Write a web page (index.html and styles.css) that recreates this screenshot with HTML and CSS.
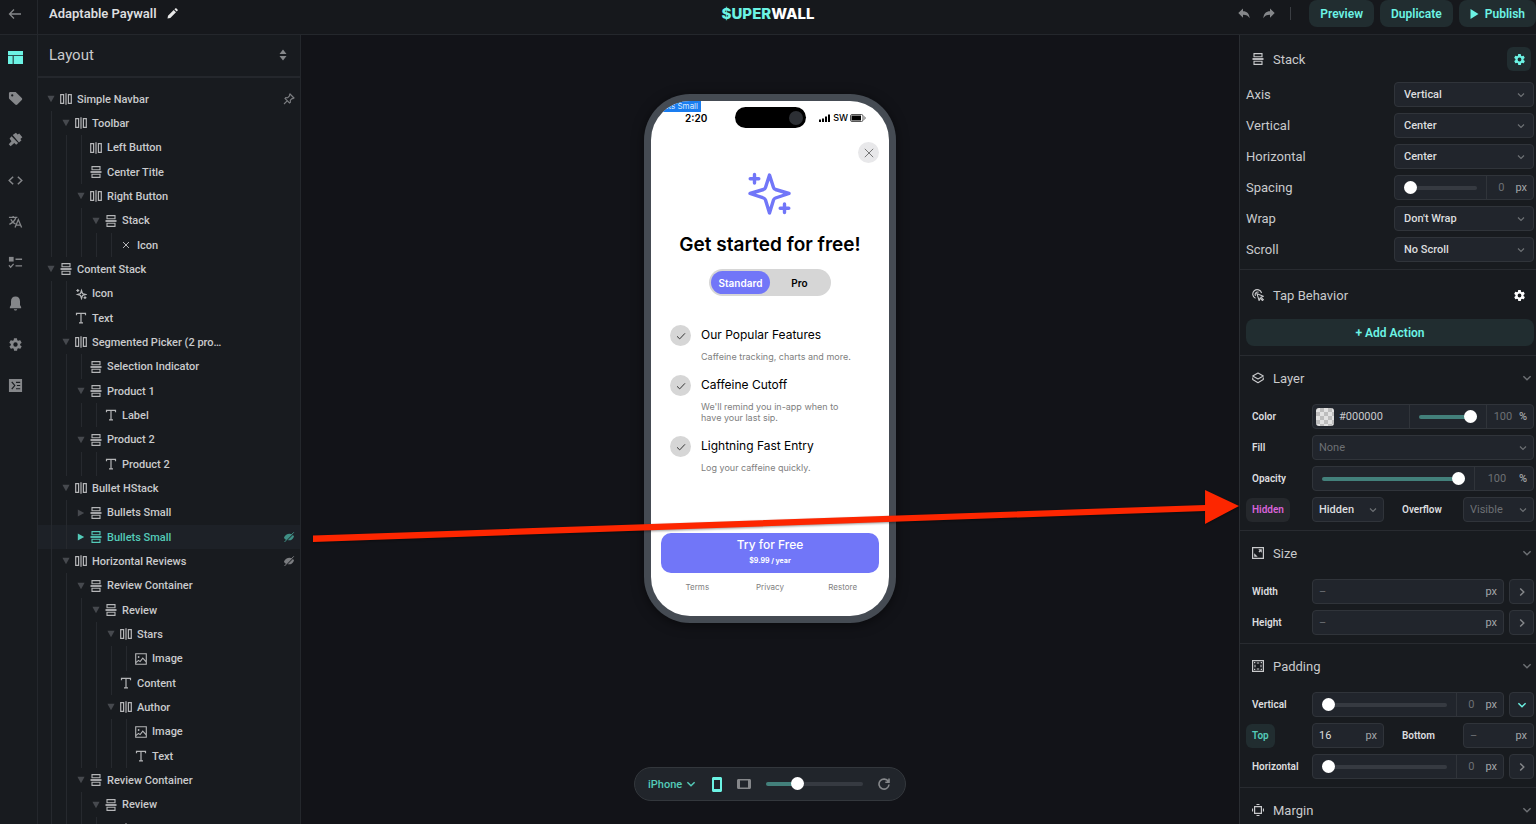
FILE: index.html
```html
<!DOCTYPE html>
<html lang="en">
<head>
    <meta charset="UTF-8">
    <meta name="viewport" content="width=device-width, initial-scale=1.0">
    <title>Adaptable Paywall - Superwall</title>
    <link rel="stylesheet" href="styles.css">
</head>
<body>
    <!-- icon sprite -->
    <svg class="sprite" aria-hidden="true">
        <symbol id="hstack" viewBox="0 0 12 12"><path d="M.7 1.7h2.900v8.600H.7zM8.400 1.700h2.900v8.600H8.400zM6 .3v11.400" fill="none" stroke="currentColor" stroke-width="1.200"/></symbol>
        <symbol id="vstack" viewBox="0 0 12 12"><path d="M2 .6h8v3.200H2zM2 8.200h8v3.200H2z" fill="none" stroke="currentColor" stroke-width="1.100"/><path d="M.5 6h11" fill="none" stroke="currentColor" stroke-width="1.800"/></symbol>
        <symbol id="text" viewBox="0 0 12 12"><path d="M1.500 3.200V1.300h9v1.900M6 1.300v9.600M4 10.900h4" fill="none" stroke="currentColor" stroke-width="1.200"/></symbol>
        <symbol id="image" viewBox="0 0 12 12"><path d="M.7.7h10.600v10.600H.7zM.9 9.600l2.600-2.200 1.600 1.200 2.700-3.400 3.400 3.600" fill="none" stroke="currentColor" stroke-width="1.100"/><circle cx="3.600" cy="4" r=".9" fill="currentColor"/></symbol>
        <symbol id="cross" viewBox="0 0 12 12"><path d="M3 3l6 6M9 3l-6 6" fill="none" stroke="currentColor" stroke-width="1"/></symbol>
        <symbol id="spark" viewBox="0 0 12 12"><path d="M6.500 2.500l1 3 3 1-3 1-1 3-1-3-3-1 3-1zM2.800 1v3M1.300 2.500h3M10 8.300v2.800M8.600 9.700h2.800" fill="none" stroke="currentColor" stroke-width="1.200"/></symbol>
        <symbol id="down" viewBox="0 0 10 10"><path d="M.5 1h9L5 9z" fill="currentColor"/></symbol>
        <symbol id="right" viewBox="0 0 10 10"><path d="M1 .5v9L9 5z" fill="currentColor"/></symbol>
        <symbol id="chev-down" viewBox="0 0 10 10"><path d="M2 3.500l3 3 3-3" fill="none" stroke="currentColor" stroke-width="1.200"/></symbol>
        <symbol id="chev-right" viewBox="0 0 10 10"><path d="M3.500 2l3 3-3 3" fill="none" stroke="currentColor" stroke-width="1.200"/></symbol>
        <symbol id="hidden-eye" viewBox="0 0 12 12"><path d="M1 6.600C2.200 3.400 6 2 9 3.400L3.400 9C2 8.600 1.300 7.600 1 6.600zM11 5.400C9.800 8.600 7.500 9.800 4.700 9.200L9.900 4C10.500 4.400 10.800 4.900 11 5.400z" fill="currentColor"/><path d="M1.500 11L10.800 1.300" stroke="currentColor" stroke-width="1"/></symbol>
        <symbol id="gear" viewBox="0 0 24 24"><path fill="currentColor" d="M19.400 13a7.500 7.500 0 0 0 0-2l2.100-1.600a.5.5 0 0 0 .1-.7l-2-3.400a.5.5 0 0 0-.6-.2l-2.500 1a7.300 7.300 0 0 0-1.700-1l-.4-2.700a.5.5 0 0 0-.5-.4h-4a.5.5 0 0 0-.5.4L9.100 5.100a7.700 7.700 0 0 0-1.700 1l-2.500-1a.5.5 0 0 0-.6.2l-2 3.400a.5.5 0 0 0 .1.700L4.600 11a7.900 7.900 0 0 0 0 2l-2.100 1.600a.5.5 0 0 0-.1.700l2 3.400c.1.200.4.300.6.200l2.500-1c.5.400 1.100.7 1.700 1l.4 2.700c0 .2.200.4.500.4h4c.2 0 .5-.2.5-.4l.4-2.700a7.300 7.300 0 0 0 1.700-1l2.500 1c.2.100.5 0 .6-.2l2-3.400a.5.5 0 0 0-.1-.7zM12 15.500a3.500 3.500 0 1 1 0-7 3.500 3.500 0 0 1 0 7z"/></symbol>
        <symbol id="check" viewBox="0 0 10 10"><path d="M1 5.300l2.700 2.600L9 2.300" fill="none" stroke="currentColor" stroke-width="1"/></symbol>
    </svg>

    <header class="topbar">
        <div class="topbar-left">
            <button class="back" aria-label="Back"><svg width="14" height="12" viewBox="0 0 14 12"><path d="M13 6H1.500M6 1.500L1.500 6 6 10.500" fill="none" stroke="currentColor" stroke-width="1.300"/></svg></button>
            <h1>Adaptable Paywall</h1>
            <button class="plain" aria-label="Rename"><svg width="11" height="11" viewBox="0 0 11 11"><path d="M.5 10.500l.5-2.800L6.700 2l2.300 2.300-5.700 5.700zM7.400 1.300l.8-.8c.4-.4 1-.3 1.300 0l1 1c.4.4.4.9 0 1.300l-.8.8z" fill="currentColor"/></svg></button>
        </div>
        <div class="logo"><span>$UPER</span>WALL</div>
        <div class="topbar-right">
            <button class="plain dim" aria-label="Undo"><svg width="12" height="11" viewBox="0 0 12 11"><path d="M5 .5v2.800c4 0 6.300 2.600 6.700 7C10.300 7.900 8.300 6.800 5 6.800v2.900L.3 5z" fill="currentColor"/></svg></button>
            <button class="plain dim" aria-label="Redo"><svg width="12" height="11" viewBox="0 0 12 11"><path d="M7 .5v2.800c-4 0-6.300 2.600-6.700 7C1.700 7.900 3.700 6.800 7 6.800v2.900L11.700 5z" fill="currentColor"/></svg></button>
            <span class="divider"></span>
            <button class="btn">Preview</button>
            <button class="btn">Duplicate</button>
            <button class="btn publish"><svg width="9" height="10" viewBox="0 0 9 10"><path d="M.5 0v10L8.500 5z" fill="currentColor"/></svg>Publish</button>
        </div>
    </header>

    <div class="workspace">
        <nav class="rail">
            <button class="active" aria-label="Layout"><svg viewBox="0 0 16 16"><path d="M0 1h16v4.500H0zM0 6.500h5V15H0zM6 6.500h10V15H6z" fill="currentColor"/></svg></button>
            <button aria-label="Products"><svg viewBox="0 0 16 16"><path d="M1 2.500C1 1.600 1.700 1 2.500 1h5c.5 0 .9.100 1.200.5l6 6c.6.600.6 1.600 0 2.200l-4.800 4.800c-.6.600-1.600.6-2.200 0l-6.200-6C1.100 8.200 1 7.900 1 7.500zM4.500 3.500a1.200 1.200 0 1 0 0 2.400 1.200 1.200 0 0 0 0-2.400z" fill="currentColor" fill-rule="evenodd"/></svg></button>
            <button aria-label="Theme"><svg viewBox="0 0 16 16"><path d="M5 3.200l3.500-2.400 1.700 1.800L12 1.500l3.300 4.200-2.100 1.800 1.200 1.400-2.700 2.400z" fill="currentColor"/><path d="M3.800 4.500l7 7.200-2.100 1.800-2-1.800-3.900 3.500-2-2.200L3.700 9.800 1.700 6.900z" fill="currentColor"/></svg></button>
            <button aria-label="Code"><svg viewBox="0 0 16 16"><path d="M5.500 4L1.300 8l4.200 4M10.500 4l4.200 4-4.200 4" fill="none" stroke="currentColor" stroke-width="1.600"/></svg></button>
            <button aria-label="Localization"><svg viewBox="0 0 16 16"><path d="M1 3.500h9M5.500 2v1.500M8.500 3.500C7.500 7 4.500 9.500 1.500 11M3 5.500c1 2.500 2.500 4 5 5M7.500 14.500l3.500-8.500 3.500 8.500M8.800 11.800h4.500" fill="none" stroke="currentColor" stroke-width="1.400"/></svg></button>
            <button aria-label="Checklist"><svg viewBox="0 0 16 16"><path d="M1 2h5v5H1z" fill="currentColor"/><path d="M8 4.500h7M8 11.500h7M1 11l1.800 2L6 9.500" fill="none" stroke="currentColor" stroke-width="1.400"/></svg></button>
            <button aria-label="Notifications"><svg viewBox="0 0 16 16"><path d="M8 .5c-3 0-4.800 2-4.800 5v4L2 11.800V13h12v-1.200l-1.200-2.300v-4c0-3-1.800-5-4.800-5zM6.200 14h3.600c-.2 1-.9 1.500-1.800 1.500S6.400 15 6.200 14z" fill="currentColor"/></svg></button>
            <button aria-label="Settings"><svg><use href="#gear"/></svg></button>
            <button aria-label="Console"><svg viewBox="0 0 16 16"><path d="M1 1h14v14H1zM3.500 4.500L6.500 8l-3 3.500 1 .8L8 8 4.500 3.700zM8.500 4v1.200H13V4zM9.500 7.400v1.200H13V7.400zM8.500 10.800V12H13v-1.200z" fill="currentColor" fill-rule="evenodd"/></svg></button>
        </nav>

        <aside class="layers">
            <div class="layers-head">
                <h2>Layout</h2>
                <button class="plain dim" aria-label="Collapse all"><svg width="8" height="12" viewBox="0 0 8 12"><path d="M.5 5h7L4 .5zM.5 7h7L4 11.500z" fill="currentColor"/></svg></button>
            </div>
            <ul class="tree">
                <li style="--depth:0"><svg class="caret"><use href="#down"/></svg><svg class="ico"><use href="#hstack"/></svg>Simple Navbar<svg class="state" viewBox="0 0 12 12"><path d="M7 1l4 4-1 .6-.8-.2-1.900 1.900.1 1.900-.9.800-4.500-4.500.8-.9 1.900.1 1.900-1.900-.2-.8zM4.200 7.800L1 11" fill="none" stroke="currentColor" stroke-width="1.100"/></svg></li>
                <li style="--depth:1"><svg class="caret"><use href="#down"/></svg><svg class="ico"><use href="#hstack"/></svg>Toolbar</li>
                <li style="--depth:2"><i class="leaf"></i><svg class="ico"><use href="#hstack"/></svg>Left Button</li>
                <li style="--depth:2"><i class="leaf"></i><svg class="ico"><use href="#vstack"/></svg>Center Title</li>
                <li style="--depth:2"><svg class="caret"><use href="#down"/></svg><svg class="ico"><use href="#hstack"/></svg>Right Button</li>
                <li style="--depth:3"><svg class="caret"><use href="#down"/></svg><svg class="ico"><use href="#vstack"/></svg>Stack</li>
                <li style="--depth:4"><i class="leaf"></i><svg class="ico"><use href="#cross"/></svg>Icon</li>
                <li style="--depth:0"><svg class="caret"><use href="#down"/></svg><svg class="ico"><use href="#vstack"/></svg>Content Stack</li>
                <li style="--depth:1"><i class="leaf"></i><svg class="ico"><use href="#spark"/></svg>Icon</li>
                <li style="--depth:1"><i class="leaf"></i><svg class="ico"><use href="#text"/></svg>Text</li>
                <li style="--depth:1"><svg class="caret"><use href="#down"/></svg><svg class="ico"><use href="#hstack"/></svg>Segmented Picker (2 pro…</li>
                <li style="--depth:2"><i class="leaf"></i><svg class="ico"><use href="#vstack"/></svg>Selection Indicator</li>
                <li style="--depth:2"><svg class="caret"><use href="#down"/></svg><svg class="ico"><use href="#vstack"/></svg>Product 1</li>
                <li style="--depth:3"><i class="leaf"></i><svg class="ico"><use href="#text"/></svg>Label</li>
                <li style="--depth:2"><svg class="caret"><use href="#down"/></svg><svg class="ico"><use href="#vstack"/></svg>Product 2</li>
                <li style="--depth:3"><i class="leaf"></i><svg class="ico"><use href="#text"/></svg>Product 2</li>
                <li style="--depth:1"><svg class="caret"><use href="#down"/></svg><svg class="ico"><use href="#hstack"/></svg>Bullet HStack</li>
                <li style="--depth:2"><svg class="caret"><use href="#right"/></svg><svg class="ico"><use href="#vstack"/></svg>Bullets Small</li>
                <li class="selected" style="--depth:2"><svg class="caret"><use href="#right"/></svg><svg class="ico"><use href="#vstack"/></svg>Bullets Small<svg class="state"><use href="#hidden-eye"/></svg></li>
                <li style="--depth:1"><svg class="caret"><use href="#down"/></svg><svg class="ico"><use href="#hstack"/></svg>Horizontal Reviews<svg class="state"><use href="#hidden-eye"/></svg></li>
                <li style="--depth:2"><svg class="caret"><use href="#down"/></svg><svg class="ico"><use href="#vstack"/></svg>Review Container</li>
                <li style="--depth:3"><svg class="caret"><use href="#down"/></svg><svg class="ico"><use href="#vstack"/></svg>Review</li>
                <li style="--depth:4"><svg class="caret"><use href="#down"/></svg><svg class="ico"><use href="#hstack"/></svg>Stars</li>
                <li style="--depth:5"><i class="leaf"></i><svg class="ico"><use href="#image"/></svg>Image</li>
                <li style="--depth:4"><i class="leaf"></i><svg class="ico"><use href="#text"/></svg>Content</li>
                <li style="--depth:4"><svg class="caret"><use href="#down"/></svg><svg class="ico"><use href="#hstack"/></svg>Author</li>
                <li style="--depth:5"><i class="leaf"></i><svg class="ico"><use href="#image"/></svg>Image</li>
                <li style="--depth:5"><i class="leaf"></i><svg class="ico"><use href="#text"/></svg>Text</li>
                <li style="--depth:2"><svg class="caret"><use href="#down"/></svg><svg class="ico"><use href="#vstack"/></svg>Review Container</li>
                <li style="--depth:3"><svg class="caret"><use href="#down"/></svg><svg class="ico"><use href="#vstack"/></svg>Review</li>
                <li style="--depth:4"><svg class="caret"><use href="#down"/></svg><svg class="ico"><use href="#hstack"/></svg></li>
            </ul>
        </aside>

        <main class="canvas">
            <div class="phone">
                <div class="screen">
                    <span class="tag">Bullets Small</span>
                    <div class="status">
                        <span class="time">2:20</span>
                        <span class="island"><i></i></span>
                        <span class="signal">
                            <svg width="12" height="8" viewBox="0 0 12 8"><path d="M0 5.500h2V8H0zM3 4.500h2V8H3zM6 2.500h2V8H6zM9 .5h2V8H9z" fill="#000"/></svg>
                            SW
                            <svg width="16" height="8" viewBox="0 0 16 8"><rect x=".5" y=".5" width="12.500" height="7" rx="1.500" fill="none" stroke="#555"/><path d="M1.500 1.500h9.500v5H1.500z" fill="#000"/><path d="M14.300 2.500c1 .5 1 2.500 0 3" fill="none" stroke="#555"/></svg>
                        </span>
                    </div>
                    <button class="close" aria-label="Close"><svg width="10" height="10" viewBox="0 0 10 10"><path d="M.8.8l8.400 8.400M9.200.8L.8 9.200" stroke="#777" stroke-width="1"/></svg></button>
                    <svg class="sparkle" viewBox="0 0 44 44"><path d="M21.500 3l4 12.500q.5 1.500 2 2L41 21.500l-13.500 4.500q-1.500.5-2 2L21.500 41l-4-13q-.5-1.500-2-2L2 21.500l13.500-4q1.500-.5 2-2z" fill="none" stroke="#7176f8" stroke-width="3.400" stroke-linejoin="round"/><path d="M6.500 2.500v8.500M2.200 6.700h8.600M36.500 32v8.500M32.200 36.200h8.600" stroke="#7176f8" stroke-width="3.400" stroke-linecap="round"/></svg>
                    <h3>Get started for free!</h3>
                    <div class="segment">
                        <button class="on">Standard</button>
                        <button>Pro</button>
                    </div>
                    <ul class="features">
                        <li><i><svg width="10" height="10"><use href="#check"/></svg></i><div><h4>Our Popular Features</h4><p>Caffeine tracking, charts and more.</p></div></li>
                        <li><i><svg width="10" height="10"><use href="#check"/></svg></i><div><h4>Caffeine Cutoff</h4><p>We'll remind you in-app when to<br>have your last sip.</p></div></li>
                        <li><i><svg width="10" height="10"><use href="#check"/></svg></i><div><h4>Lightning Fast Entry</h4><p>Log your caffeine quickly.</p></div></li>
                    </ul>
                    <button class="cta">Try for Free<small>$9.99 / year</small></button>
                    <div class="legal"><a href="#">Terms</a><a href="#">Privacy</a><a href="#">Restore</a></div>
                </div>
            </div>

            <!-- arrow from the selected layer to its Hidden property -->
            <svg class="arrow" viewBox="0 0 928 60" preserveAspectRatio="none"><path d="M1 45.500L894 15V0L928 16 894 34V21L1 52z" fill="#fd2600"/></svg>

            <div class="device-bar">
                <button class="device">iPhone<svg width="12" height="12"><use href="#chev-down"/></svg></button>
                <button class="teal" aria-label="Portrait"><svg width="10" height="15" viewBox="0 0 10 15"><path d="M0 1.500C0 .6.600 0 1.500 0h7c.9 0 1.500.6 1.500 1.500v12c0 .9-.6 1.500-1.500 1.500h-7C.6 15 0 14.400 0 13.500zM2 3v9h6V3z" fill="currentColor" fill-rule="evenodd"/></svg></button>
                <button aria-label="Landscape"><svg width="14" height="10" viewBox="0 0 14 10"><path d="M1.500 0h11c.9 0 1.500.6 1.500 1.500v7c0 .9-.6 1.500-1.500 1.500h-11C.6 10 0 9.400 0 8.500v-7C0 .6.600 0 1.500 0zM3 1.500v7h8v-7z" fill="currentColor" fill-rule="evenodd"/></svg></button>
                <input type="range" aria-label="Zoom" value="30" style="--fill:33%">
                <button aria-label="Reload"><svg width="12" height="12" viewBox="0 0 12 12"><path d="M10.300 3.500A5 5 0 1 0 11 6.500M11 .5v3.700H7.300" fill="none" stroke="currentColor" stroke-width="1.600"/></svg></button>
            </div>
        </main>

        <aside class="props">
            <section class="group stack-group">
                <div class="group-head">
                    <svg class="gi"><use href="#vstack"/></svg><h2>Stack</h2>
                    <button class="gear on" aria-label="Stack settings"><svg><use href="#gear"/></svg></button>
                </div>
                <div class="fields big">
                    <div class="field"><label for="axis">Axis</label><select id="axis"><option>Vertical</option></select></div>
                    <div class="field"><label for="valign">Vertical</label><select id="valign"><option>Center</option></select></div>
                    <div class="field"><label for="halign">Horizontal</label><select id="halign"><option>Center</option></select></div>
                    <div class="field"><label for="spacing">Spacing</label>
                        <div class="box"><input type="range" id="spacing" value="0" style="--fill:0%"><span class="num narrow"><input type="text" aria-label="Spacing value" value="0">px</span></div></div>
                    <div class="field"><label for="wrap">Wrap</label><select id="wrap"><option>Don't Wrap</option></select></div>
                    <div class="field"><label for="scroll">Scroll</label><select id="scroll"><option>No Scroll</option></select></div>
                </div>
            </section>

            <section class="group tap-group">
                <div class="group-head">
                    <svg class="gi" viewBox="0 0 12 12"><path d="M3.500 9.300A4.500 4.500 0 1 1 9.600 4M3.600 6.800a2.400 2.400 0 0 1 3-3.500M5 4.800l6.300 2.500-2.300 1 2.300 2.300-.9.900-2.300-2.300-1 2.300z" fill="none" stroke="currentColor" stroke-width="1.100"/></svg><h2>Tap Behavior</h2>
                    <button class="gear" aria-label="Tap settings"><svg><use href="#gear"/></svg></button>
                </div>
                <button class="btn wide">+ Add Action</button>
            </section>

            <section class="group">
                <div class="group-head">
                    <svg class="gi" viewBox="0 0 12 12"><path d="M6 1l5.300 3L6 7 .7 4zM.7 5.500v2L6 10.800l5.300-3.300v-2" fill="none" stroke="currentColor" stroke-width="1.100" stroke-linejoin="round"/></svg><h2>Layer</h2>
                    <svg class="fold"><use href="#chev-down"/></svg>
                </div>
                <div class="fields">
                    <div class="field"><label for="color">Color</label>
                        <div class="box"><span class="swatch"></span><input type="text" class="hex" id="color" value="#000000"><span class="alpha"><input type="range" aria-label="Alpha" value="100" style="--fill:100%"></span><span class="num narrow"><input type="text" aria-label="Alpha value" value="100"><b>%</b></span></div></div>
                    <div class="field"><label for="fill">Fill</label><select id="fill" class="muted"><option>None</option></select></div>
                    <div class="field"><label for="opacity">Opacity</label>
                        <div class="box"><input type="range" id="opacity" value="100" style="--fill:100%"><span class="num"><input type="text" aria-label="Opacity value" value="100"><b>%</b></span></div></div>
                    <div class="field pair"><label class="pill pink" for="hidden">Hidden</label><select id="hidden"><option>Hidden</option></select>
                        <label for="overflow">Overflow</label><select id="overflow" class="muted"><option>Visible</option></select></div>
                </div>
            </section>

            <section class="group">
                <div class="group-head">
                    <svg class="gi" viewBox="0 0 12 12"><path d="M.6.6h10.800v10.800H.6z" fill="none" stroke="currentColor" stroke-width="1.200"/><path d="M9.800 2.200v3.500L8.500 4.500 7.500 5.500l-1-1 1-1-1.200-1.300zM2.200 9.800V6.300l1.300 1.200 1 1 1.200 1.300z" fill="currentColor"/></svg><h2>Size</h2>
                    <svg class="fold"><use href="#chev-down"/></svg>
                </div>
                <div class="fields">
                    <div class="field"><label for="width">Width</label><div class="box unit"><input type="text" id="width" placeholder="–">px</div><button class="more" aria-label="More width options"><svg width="12" height="12"><use href="#chev-right"/></svg></button></div>
                    <div class="field"><label for="height">Height</label><div class="box unit"><input type="text" id="height" placeholder="–">px</div><button class="more" aria-label="More height options"><svg width="12" height="12"><use href="#chev-right"/></svg></button></div>
                </div>
            </section>

            <section class="group">
                <div class="group-head">
                    <svg class="gi" viewBox="0 0 12 12"><path d="M.6.6h10.800v10.800H.6z" fill="none" stroke="currentColor" stroke-width="1.200"/><path d="M4.800 2.500h2.400v1H4.800zM4.800 8.500h2.400v1H4.800zM2.500 4.800h1v2.400h-1zM8.500 4.800h1v2.400h-1zM2 2h1.300v1.300H2zM8.700 2H10v1.300H8.700zM2 8.700h1.300V10H2zM8.700 8.700H10V10H8.700z" fill="currentColor"/></svg><h2>Padding</h2>
                    <svg class="fold"><use href="#chev-down"/></svg>
                </div>
                <div class="fields">
                    <div class="field"><label for="padv">Vertical</label><div class="box"><input type="range" id="padv" value="0" style="--fill:0%"><span class="num narrow"><input type="text" aria-label="Vertical padding" value="0">px</span></div><button class="more teal" aria-label="Split vertical padding"><svg width="12" height="12"><use href="#chev-down"/></svg></button></div>
                    <div class="field pair"><label class="pill green" for="padtop">Top</label><div class="box unit"><input type="text" id="padtop" value="16">px</div>
                        <label for="padbottom">Bottom</label><div class="box unit"><input type="text" id="padbottom" placeholder="–">px</div></div>
                    <div class="field"><label for="padh">Horizontal</label><div class="box"><input type="range" id="padh" value="0" style="--fill:0%"><span class="num narrow"><input type="text" aria-label="Horizontal padding" value="0">px</span></div><button class="more" aria-label="Split horizontal padding"><svg width="12" height="12"><use href="#chev-right"/></svg></button></div>
                </div>
            </section>

            <section class="group">
                <div class="group-head">
                    <svg class="gi" viewBox="0 0 12 12"><path d="M2.600 2.600h6.800v6.800H2.600zM4.500.5h3M4.500 11.500h3M.5 4.500v3M11.500 4.500v3" fill="none" stroke="currentColor" stroke-width="1.200"/></svg><h2>Margin</h2>
                    <svg class="fold"><use href="#chev-down"/></svg>
                </div>
            </section>
        </aside>
    </div>
</body>
</html>
```

FILE: styles.css
```css
* {
    box-sizing: border-box;
}
body {
    margin: 0;
    height: 100vh;
    display: flex;
    flex-direction: column;
    overflow: hidden;
    background: #121318;
    color: #c9cacc;
    font-family: Roboto, "Liberation Sans", sans-serif;
    font-size: 11px;
    font-weight: 500;
}
h1, h2, h3, h4, p, ul {
    margin: 0;
    padding: 0;
}
ul {
    list-style: none;
}
button, input, select {
    font: inherit;
    color: inherit;
    margin: 0;
    padding: 0;
    border: none;
    background: none;
    outline: none;
}
button {
    display: flex;
    align-items: center;
    justify-content: center;
    cursor: pointer;
}
svg {
    display: block;
    flex: none;
}
.sprite {
    position: absolute;
    width: 0;
    height: 0;
}

/* top bar */
.topbar {
    display: grid;
    grid-template-columns: 1fr auto 1fr;
    align-items: center;
    height: 35px;
    flex: none;
    background: #16181c;
    border-bottom: 1px solid #24272c;
}
.topbar-left {
    display: flex;
    align-items: center;
    align-self: stretch;
    padding-bottom: 7px;
}
.back {
    width: 38px;
    height: 34px;
    margin-bottom: -7px;
    padding: 0 7px 7px 0;
    color: #85878a;
    border-right: 1px solid #24272c;
}
.topbar h1 {
    margin: 0 10px 0 11px;
    font-size: 13px;
    font-weight: 600;
    color: #dcdddf;
}
.plain {
    color: #e8e8e8;
}
.dim {
    color: #85878a;
}
.logo {
    padding-bottom: 7px;
    font-family: Inter, "Liberation Sans", sans-serif;
    font-size: 15px;
    line-height: 20px;
    font-weight: 800;
    color: #fff;
}
.logo span {
    color: #6cf3e4;
}
.topbar-right {
    display: flex;
    justify-content: flex-end;
    align-items: center;
    gap: 6px;
    padding-bottom: 7px;
}
.topbar-right .plain {
    width: 19px;
}
.divider {
    width: 1px;
    height: 13px;
    margin: 0 12px 0 6px;
    background: #3b3e43;
}
.btn {
    height: 27px;
    padding: 0 11px;
    border-radius: 8px;
    background: #212d30;
    color: #6cf3e4;
    font-size: 12px;
    font-weight: 600;
}
.publish {
    gap: 6px;
}
.wide {
    width: 100%;
}

.workspace {
    flex: 1;
    min-height: 0;
    display: flex;
}

/* icon rail */
.rail {
    width: 38px;
    flex: none;
    display: flex;
    flex-direction: column;
    align-items: center;
    gap: 21px;
    padding: 12px 6px 0 0;
    background: #181b1f;
    border-right: 1px solid #24272c;
}
.rail button {
    width: 20px;
    height: 20px;
    color: #85878a;
}
.rail svg {
    width: 15px;
    height: 15px;
}
.rail .active {
    color: #6cf3e4;
}

/* layer tree */
.layers {
    width: 263px;
    flex: none;
    overflow: hidden;
    background: #181b1f;
    border-right: 1px solid #24272c;
}
.layers-head {
    display: flex;
    align-items: center;
    justify-content: space-between;
    height: 43px;
    padding: 0 13px 2px 11px;
    border-bottom: 2px solid #24272c;
}
.layers-head h2 {
    font-size: 15px;
}
h2 {
    font-size: 13px;
    font-weight: 400;
}
.tree {
    padding-top: 9px;
}
.tree li {
    display: flex;
    align-items: center;
    height: 24px;
    padding: 0 5px 0 13px;
    white-space: nowrap;
}
.tree li:nth-child(3n) {
    height: 25px;
}
/* indent guides, one line per level */
.tree li::before {
    content: "";
    align-self: stretch;
    width: calc(var(--depth) * 15px);
    background: repeating-linear-gradient(90deg, #26292e 0 1px, transparent 1px 15px);
}
.caret {
    width: 10px;
    height: 8px;
    margin: 0 4px 0 -5px;
    color: #46494e;
}
.leaf {
    align-self: stretch;
    width: 9px;
    border-left: 1px solid #26292e;
}
.ico {
    width: 12px;
    height: 12px;
    margin-right: 5px;
    color: #b5b6b8;
}
.state {
    width: 12px;
    height: 12px;
    margin-left: auto;
    color: #7b7d80;
}
.tree .selected {
    background: #1d2127;
    color: #54cbb9;
}
.selected .caret, .selected .ico {
    color: #54cbb9;
}
.selected .state {
    color: #3f8f85;
}

/* canvas */
.canvas {
    flex: 1;
    position: relative;
    min-width: 0;
    padding-top: 59px;
}
.phone {
    width: 252px;
    margin: 0 auto;
    padding: 7px;
    border-radius: 46px;
    background: #454b53;
    box-shadow: 0 2px 12px rgba(0,0,0,0.5);
    font-family: Inter, "Liberation Sans", sans-serif;
}
.screen {
    position: relative;
    display: flex;
    flex-direction: column;
    height: 515px;
    padding: 6px 10px 23px;
    border-radius: 39px;
    background: #fff;
    color: #000;
    overflow: hidden;
}
.tag {
    position: absolute;
    top: 0;
    left: 0;
    width: 50px;
    padding-right: 3px;
    display: flex;
    justify-content: flex-end;
    background: #1a7df0;
    color: #dcebff;
    font-size: 8px;
    line-height: 11px;
    white-space: nowrap;
    font-weight: 400;
}
.status {
    display: grid;
    grid-template-columns: 1fr 71px 1fr;
    align-items: center;
    font-size: 9px;
    font-weight: 500;
}
.time {
    padding-left: 24px;
    font-size: 10px;
    font-weight: 600;
}
.island {
    display: flex;
    align-items: center;
    justify-content: flex-end;
    height: 21px;
    padding-right: 3px;
    border-radius: 11px;
    background: #000;
}
.island i {
    width: 14px;
    height: 14px;
    border-radius: 50%;
    background: #2c2f34;
}
.signal {
    display: flex;
    align-items: center;
    justify-content: flex-end;
    gap: 2px;
    padding-right: 13px;
}
.close {
    align-self: flex-end;
    width: 21px;
    height: 21px;
    margin-top: 14px;
    border-radius: 50%;
    background: #e8e8ea;
}
.sparkle {
    width: 44px;
    height: 44px;
    margin: 9px auto 17px;
}
.screen h3 {
    font-size: 19px;
    line-height: 24px;
    font-weight: 600;
    text-align: center;
    white-space: nowrap;
}
.segment {
    display: flex;
    align-self: center;
    width: 122px;
    margin: 12px 0 29px;
    padding: 2px;
    border-radius: 14px;
    background: #d6d6d6;
}
.segment button {
    flex: 1;
    height: 23px;
    border-radius: 12px;
    font-size: 10px;
    font-weight: 600;
}
.segment .on {
    background: #7176f8;
    color: #fff;
}
.features {
    display: flex;
    flex-direction: column;
    gap: 13px;
    margin-bottom: auto;
    padding-left: 9px;
}
.features li {
    display: flex;
    gap: 10px;
}
.features i {
    display: flex;
    align-items: center;
    justify-content: center;
    flex: none;
    width: 21px;
    height: 21px;
    border-radius: 50%;
    background: #d6d6d6;
    color: #333;
}
.features h4 {
    font-size: 12px;
    line-height: 20px;
    font-weight: 400;
}
.features p {
    margin-top: 6px;
    font-size: 9px;
    line-height: 11px;
    font-weight: 400;
    color: #808080;
    white-space: nowrap;
}
.cta {
    flex-direction: column;
    height: 40px;
    border-radius: 10px;
    background: #7176f8;
    color: #fff;
    font-size: 12px;
    line-height: 16px;
}
.cta small {
    font-size: 7px;
    font-weight: 700;
}
.legal {
    display: grid;
    grid-template-columns: 1fr 1fr 1fr;
    margin-top: 8px;
    text-align: center;
    font-size: 8px;
    line-height: 12px;
    font-weight: 400;
}
.legal a {
    color: #808080;
    text-decoration: none;
}
.arrow {
    position: absolute;
    left: 11px;
    top: 455px;
    width: calc(100% - 11px);
    height: 60px;
    filter: drop-shadow(0 1px 1px rgba(0,0,0,0.4));
}
.device-bar {
    position: absolute;
    bottom: 23px;
    left: 50%;
    transform: translateX(-50%);
    display: flex;
    align-items: center;
    width: 272px;
    height: 34px;
    padding: 0 15px 0 13px;
    gap: 15px;
    border: 1px solid #33373c;
    border-radius: 18px;
    background: #21252b;
    color: #85878a;
}
.device-bar input {
    flex: 1;
}
.device {
    gap: 3px;
    color: #54cbb9;
}
.teal {
    color: #6cf3e4;
}

/* sliders */
input[type=range] {
    -webkit-appearance: none;
    appearance: none;
    min-width: 0;
    height: 13px;
}
input[type=range]::-webkit-slider-runnable-track {
    height: 4px;
    border-radius: 2px;
    background: linear-gradient(90deg, #43807b var(--fill), #363a41 var(--fill));
}
input[type=range]::-webkit-slider-thumb {
    -webkit-appearance: none;
    width: 13px;
    height: 13px;
    margin-top: -5px;
    border-radius: 50%;
    background: #fff;
}

/* property panel */
.props {
    width: 297px;
    flex: none;
    overflow: hidden;
    background: #181b1f;
    border-left: 1px solid #2a2d32;
}
.group {
    padding: 10px 2px 7px 6px;
    border-bottom: 1px solid #282b30;
}
.stack-group {
    padding-top: 12px;
}
.tap-group {
    padding: 13px 2px 9px 6px;
}
.group-head {
    display: flex;
    align-items: center;
    height: 24px;
    margin-bottom: 14px;
    padding-left: 6px;
}
.stack-group .group-head {
    margin-bottom: 11px;
}
.tap-group .group-head {
    margin-bottom: 12px;
}
.group:not(.stack-group) .fields {
    padding-bottom: 1px;
}
.gi {
    width: 12px;
    height: 12px;
    margin-right: 9px;
}
.gear {
    width: 24px;
    height: 24px;
    margin: 0 3px 0 auto;
    border-radius: 6px;
    color: #fff;
}
.gear.on {
    background: #212d30;
    color: #6cf3e4;
}
.gear svg {
    width: 13px;
    height: 13px;
}
.fold {
    width: 12px;
    height: 12px;
    margin: 0 1px 0 auto;
    color: #6d7074;
}
.fields {
    display: flex;
    flex-direction: column;
    gap: 6px;
}
.field {
    display: grid;
    grid-template-columns: 66px 1fr auto;
    align-items: center;
    height: 25px;
}
.field label {
    padding-left: 6px;
    font-size: 10px;
    font-weight: 600;
    color: #dcdddf;
}
.big .field {
    grid-template-columns: 1fr 140px;
}
.big label {
    padding: 0;
    font-size: 13px;
    font-weight: 400;
    color: #c9cacc;
}
.field.pair {
    grid-template-columns: 66px 72px 79px 71px;
}
.field.pair label:nth-of-type(2) {
    padding-left: 18px;
}
.field .pill {
    justify-self: start;
    padding: 0 6px;
    line-height: 24px;
    border-radius: 6px;
    background: #25282c;
}
.field .pink {
    color: #d863d8;
}
.field .green {
    background: #212d30;
    color: #54cbb9;
}
select, .box, .more {
    width: 100%;
    height: 25px;
    border: 1px solid #30343a;
    border-radius: 4px;
    background-color: #21252c;
}
select {
    -webkit-appearance: none;
    appearance: none;
    padding: 0 7px 0 6px;
    background-image: url("data:image/svg+xml,%3Csvg xmlns='http://www.w3.org/2000/svg' width='10' height='10'%3E%3Cpath d='M2 3.5l3 3 3-3' fill='none' stroke='%236d7074' stroke-width='1.2'/%3E%3C/svg%3E");
    background-repeat: no-repeat;
    background-position: right 5px center;
    color: #dcdddf;
}
.big select {
    padding-left: 9px;
    background-position: right 7px center;
}
.muted {
    color: #6d7074;
    font-weight: 400;
}
.box {
    display: flex;
    align-items: center;
    min-width: 0;
    color: #a3a5a8;
    font-weight: 400;
}
.box input {
    min-width: 0;
    flex: 1;
}
.box > input[type=range] {
    margin: 0 9px;
}
.num {
    display: flex;
    align-items: center;
    align-self: stretch;
    width: 59px;
    padding-right: 6px;
    border-left: 1px solid #30343a;
}
.narrow {
    width: 47px;
}
.num input {
    text-align: center;
    color: #6d7074;
}
.num b {
    font-weight: 500;
}
.swatch {
    width: 18px;
    height: 18px;
    margin: 0 5px 0 3px;
    border-radius: 3px;
    background: repeating-conic-gradient(#bdbdbd 0 25%, #e2e2e2 0 50%) 0 0 / 8px 8px;
}
.box .hex {
    color: #c9cacc;
}
.alpha {
    display: flex;
    align-items: center;
    align-self: stretch;
    width: 77px;
    padding: 0 9px;
    border-left: 1px solid #30343a;
}
.unit {
    padding: 0 6px;
}
.unit input {
    color: #dcdddf;
}
.unit input::placeholder {
    color: #6d7074;
}
.more {
    width: 25px;
    margin-left: 5px;
    color: #85878a;
}
.more.teal {
    color: #6cf3e4;
}
```
